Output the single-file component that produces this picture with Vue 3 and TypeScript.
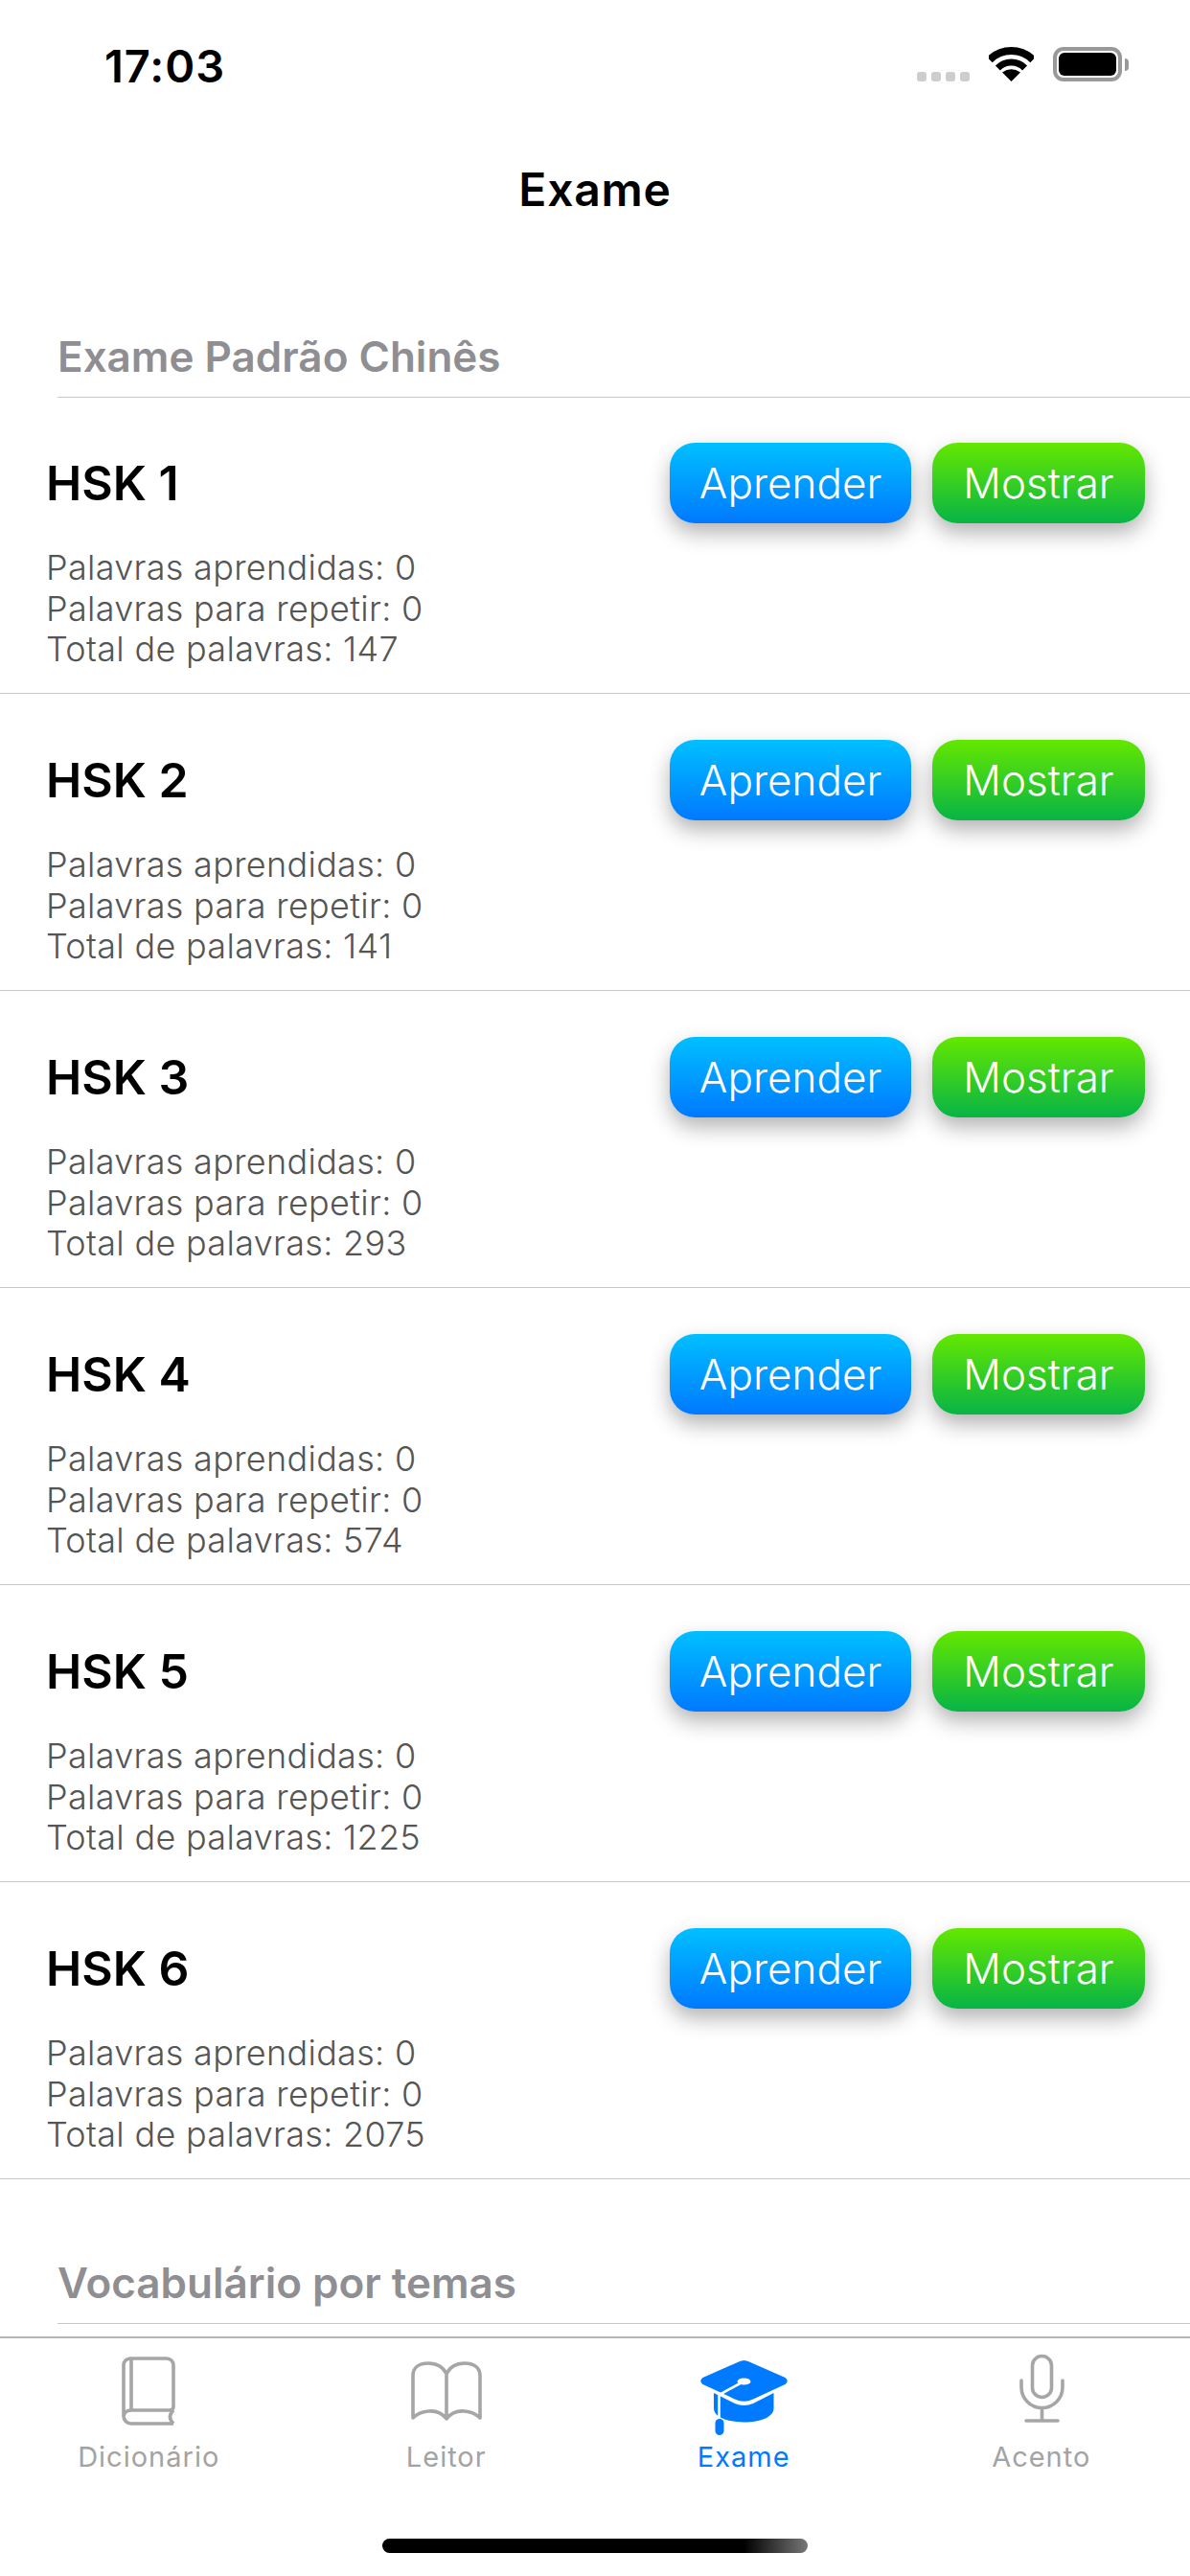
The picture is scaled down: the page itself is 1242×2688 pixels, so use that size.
<script setup lang="ts">
const levels = [
  { name: 'HSK 1', total: 147 },
  { name: 'HSK 2', total: 141 },
  { name: 'HSK 3', total: 293 },
  { name: 'HSK 4', total: 574 },
  { name: 'HSK 5', total: 1225 },
  { name: 'HSK 6', total: 2075 },
]
</script>

<template>
  <div class="page">
    <div class="status">
      <span class="time">17:03</span>
      <div class="status-right">
        <div class="dots"><i></i><i></i><i></i><i></i></div>
        <svg class="wifi" width="47" height="36" viewBox="0 0 47 36">
          <path d="M0.9 13.4A32 32 0 0 1 46.1 13.4" fill="none" stroke="#000" stroke-width="8" />
          <path d="M9.4 21.9A20 20 0 0 1 37.6 21.9" fill="none" stroke="#000" stroke-width="7" />
          <path d="M23.5 36L14 26.5Q23.5 20 33 26.5Z" fill="#000" />
        </svg>
        <div class="battery"><div class="charge"></div></div>
        <div class="nub"></div>
      </div>
    </div>

    <div class="nav">Exame</div>

    <div class="content">
      <div class="section-head">Exame Padrão Chinês</div>
      <div v-for="level in levels" :key="level.name" class="row">
        <div class="row-top">
          <span class="level">{{ level.name }}</span>
          <div class="actions">
            <div class="btn blue">Aprender</div>
            <div class="btn green">Mostrar</div>
          </div>
        </div>
        <div class="stats">
          <div>Palavras aprendidas: 0</div>
          <div>Palavras para repetir: 0</div>
          <div>Total de palavras: {{ level.total }}</div>
        </div>
      </div>
      <div class="section-head">Vocabulário por temas</div>
    </div>

    <div class="tabbar">
      <div class="tabs">
        <div class="tab">
          <svg width="100" height="90" viewBox="0 0 100 90" fill="none" stroke="#a6a6a6" stroke-width="3.6">
            <path d="M76 74H32a8 8 0 0 1-8-8V13a7 7 0 0 1 7-7H69a7 7 0 0 1 7 7V56q0 4-4 4H33q-9 0-9 7" />
            <path d="M32 6.5V60M76 60q-7 7 0 14" />
          </svg>
          <span>Dicionário</span>
        </div>
        <div class="tab">
          <svg width="100" height="90" viewBox="0 0 100 90" fill="none" stroke="#a6a6a6" stroke-width="3.6" stroke-linejoin="round">
            <path d="M50 22C46 14 38 11 31 11C22 11 15 15 15 24V68C22 61 40 56 50 69C60 56 78 61 85 68V24C85 15 78 11 69 11C62 11 54 14 50 22V69" />
          </svg>
          <span>Leitor</span>
        </div>
        <div class="tab active">
          <svg width="100" height="90" viewBox="0 0 100 90">
            <path d="M45 9.5Q50.5 6.5 56 9.5L93.5 26Q98 29.5 93.5 33L60 48.5Q50.5 53 41 48.5L7.5 33Q3 29.5 7.5 26Z" fill="#007aff" />
            <path d="M19 42L41 53Q50.5 57 60 53L81.5 42V58C81.5 67 68 72.5 50.5 72.5C33 72.5 19 67 19 58Z" fill="#007aff" />
            <path d="M50 30L24.5 44V70" fill="none" stroke="#fff" stroke-width="2.6" />
            <ellipse cx="50.5" cy="30" rx="7" ry="3.6" fill="#fff" />
            <rect x="20.5" y="69" width="9" height="17" rx="4.5" fill="#007aff" />
          </svg>
          <span>Exame</span>
        </div>
        <div class="tab">
          <svg width="100" height="90" viewBox="0 0 100 90" fill="none" stroke="#a6a6a6" stroke-width="3.6" stroke-linecap="round">
            <rect x="40.5" y="3.5" width="20" height="43" rx="10" />
            <path d="M29 29V36A21.5 21.5 0 0 0 72 36V29M50.5 58V71M34 71H67" />
          </svg>
          <span>Acento</span>
        </div>
      </div>
      <div class="home"></div>
    </div>
  </div>
</template>

<style scoped>
.page {
  width: 1242px;
  height: 2688px;
  display: flex;
  flex-direction: column;
  overflow: hidden;
  background: #fff;
  font-family: Inter, "Liberation Sans", sans-serif;
}

.status {
  height: 132px;
  box-sizing: border-box;
  display: flex;
  justify-content: space-between;
  padding: 49px 64px 0 109px;
}

.time {
  font-size: 47px;
  line-height: 40px;
  font-weight: 600;
  letter-spacing: 1px;
  color: #000;
}

.status-right {
  display: flex;
  align-items: flex-start;
  height: 36px;
}

.dots {
  display: flex;
  gap: 5px;
  margin: 26px 20px 0 0;
}

.dots i {
  display: block;
  width: 10px;
  height: 10px;
  border-radius: 3px;
  background: #cdcdcd;
}

.wifi {
  margin-right: 20px;
}

.battery {
  width: 72px;
  height: 36px;
  box-sizing: border-box;
  border: 4px solid #999;
  border-radius: 11px;
  padding: 2px;
}

.charge {
  height: 100%;
  border-radius: 6px;
  background: #000;
}

.nub {
  width: 4px;
  height: 13px;
  margin: 12px 0 0 3px;
  border-radius: 0 4px 4px 0;
  background: #999;
}

.nav {
  height: 132px;
  line-height: 132px;
  text-align: center;
  font-size: 48px;
  font-weight: 600;
  letter-spacing: 0.8px;
  color: #000;
}

.content {
  flex: 1;
  min-height: 0;
  overflow: hidden;
}

.section-head {
  margin: 84px 0 0 60px;
  height: 67px;
  line-height: 48px;
  box-sizing: border-box;
  font-size: 44px;
  font-weight: 560;
  color: #8e8e93;
  border-bottom: 1px solid #c8c8cc;
}

.row {
  height: 310px;
  box-sizing: border-box;
  padding: 48px 47px 0 48px;
  border-bottom: 1px solid #c8c8cc;
}

.section-head + .row {
  height: 309px;
  padding-top: 47px;
}

.row-top {
  display: flex;
  justify-content: space-between;
  align-items: center;
  height: 84px;
}

.level {
  font-size: 50px;
  font-weight: 560;
  color: #000;
}

.actions {
  display: flex;
  gap: 22px;
}

.btn {
  height: 84px;
  line-height: 84px;
  border-radius: 26px;
  text-align: center;
  color: #fff;
  font-size: 44px;
  font-weight: 300;
  box-shadow: 0 10px 22px rgba(0, 0, 0, 0.3);
}

.blue {
  width: 252px;
  background: linear-gradient(#00c0ff, #0079ff);
}

.green {
  width: 222px;
  background: linear-gradient(#64e800, #07b446);
}

.stats {
  margin-top: 25px;
  font-size: 36px;
  line-height: 42.7px;
  font-weight: 300;
  letter-spacing: 0.3px;
  color: #555;
}

.tabbar {
  height: 250px;
  box-sizing: border-box;
  border-top: 2px solid #b4b4b4;
  display: flex;
  flex-direction: column;
}

.tabs {
  display: grid;
  grid-template-columns: repeat(4, 1fr);
  height: 209px;
  padding-top: 15px;
  box-sizing: border-box;
}

.tab {
  display: flex;
  flex-direction: column;
  align-items: center;
  font-size: 29px;
  line-height: 34px;
  color: #a3a3a3;
  letter-spacing: 1px;
}

.tab svg {
  display: block;
  margin-bottom: 2px;
}

.tab.active {
  color: #007aff;
}

.home {
  width: 444px;
  height: 15px;
  margin: 0 auto;
  border-radius: 8px;
  background: linear-gradient(90deg, #000 85%, #777);
}
</style>

<style>
html,
body {
  margin: 0;
  background: #fff;
}
</style>
